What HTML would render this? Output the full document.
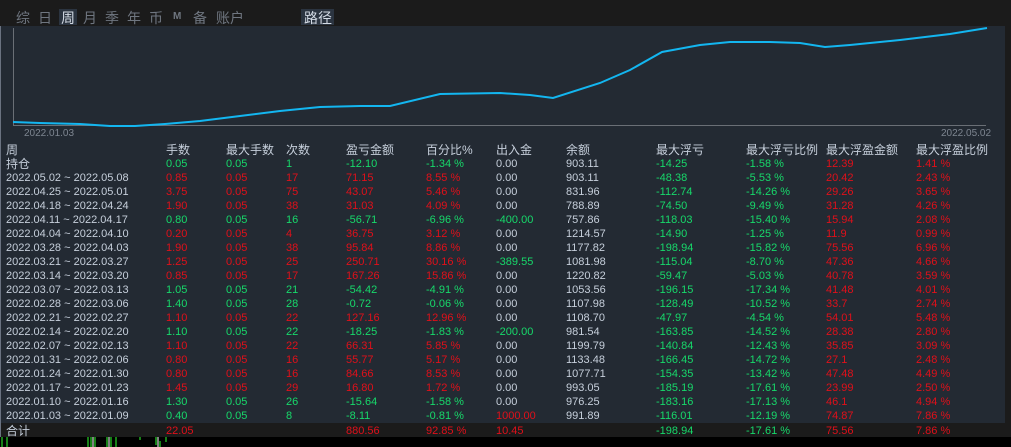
<!DOCTYPE html><html><head><meta charset="utf-8"><style>
body{margin:0;width:1011px;height:447px;background:#232a33;overflow:hidden;position:relative;font-family:"Liberation Sans","Noto Sans CJK SC",sans-serif;font-size:11px;color:#c6cfdb}
.top{position:absolute;left:0;top:0;width:1011px;height:26px;background:#1b1b1b}
.tab{position:absolute;top:8px;font-size:14px;color:#6f7680}
.row{position:absolute;left:0;width:1005px;height:14px;line-height:14px}
.row span{position:absolute;white-space:nowrap}
.a{left:6px}.b{left:166px}.c{left:226px}.d{left:286px}.e{left:346px}.f{left:426px}.g{left:496px}.h{left:566px}.i{left:656px}.j{left:746px}.k{left:826px}.l{left:916px}
.G{color:#17d86a}.R{color:#e0101a}
.hd{font-size:12px}
.cn{font-size:12px}
</style></head><body>
<div class="top">
<span class="tab" style="left:16px">综</span><span class="tab" style="left:38px">日</span>
<span style="position:absolute;left:59px;top:9px;width:18px;height:16px;background:#2b3440"></span>
<span class="tab" style="left:61px;color:#d4dbe5">周</span><span class="tab" style="left:83px">月</span><span class="tab" style="left:105px">季</span><span class="tab" style="left:127px">年</span><span class="tab" style="left:149px">币</span><span class="tab" style="left:173px;font-size:10px;top:11px;font-weight:bold">M</span><span class="tab" style="left:193px">备</span><span class="tab" style="left:216px">账户</span>
<span style="position:absolute;left:301px;top:9px;width:33px;height:16px;background:#2b3440"></span>
<span class="tab" style="left:304px;color:#d4dbe5">路径</span>
</div>
<div style="position:absolute;left:0;top:26px;width:1px;height:411px;background:#6a7280"></div>
<div style="position:absolute;left:1005px;top:26px;width:6px;height:411px;background:#1b1b1b"></div>
<svg style="position:absolute;left:0;top:0" width="1011" height="140">
<line x1="13.5" y1="28" x2="13.5" y2="125" stroke="#6a6f76"/>
<line x1="13" y1="125.5" x2="986" y2="125.5" stroke="#6a6f76"/>
<polyline fill="none" stroke="#13b6f0" stroke-width="2" points="13,122 40,123 80,124 110,126 135,126 165,124 200,121 240,116 280,111 320,107 360,106 390,106 440,94 500,93 530,95 553,98 600,83 630,70 662,52 700,45 730,42 770,42 800,43 825,47 850,45 900,40 950,34 987,28"/>
<text x="24" y="136" fill="#7d8590" font-size="10" font-family="Liberation Sans">2022.01.03</text>
<text x="941" y="136" fill="#7d8590" font-size="10" font-family="Liberation Sans">2022.05.02</text>
</svg>
<div class="row hd" style="top:143px"><span class="a">周</span><span class="b">手数</span><span class="c">最大手数</span><span class="d">次数</span><span class="e">盈亏金额</span><span class="f">百分比%</span><span class="g">出入金</span><span class="h">余额</span><span class="i">最大浮亏</span><span class="j">最大浮亏比例</span><span class="k">最大浮盈金额</span><span class="l">最大浮盈比例</span></div>
<div class="row" style="top:157px"><span class="a cn">持仓</span><span class="b G">0.05</span><span class="c G">0.05</span><span class="d G">1</span><span class="e G">-12.10</span><span class="f G">-1.34 %</span><span class="g">0.00</span><span class="h">903.11</span><span class="i G">-14.25</span><span class="j G">-1.58 %</span><span class="k R">12.39</span><span class="l R">1.41 %</span></div>
<div class="row" style="top:171px"><span class="a">2022.05.02 ~ 2022.05.08</span><span class="b R">0.85</span><span class="c R">0.05</span><span class="d R">17</span><span class="e R">71.15</span><span class="f R">8.55 %</span><span class="g">0.00</span><span class="h">903.11</span><span class="i G">-48.38</span><span class="j G">-5.53 %</span><span class="k R">20.42</span><span class="l R">2.43 %</span></div>
<div class="row" style="top:185px"><span class="a">2022.04.25 ~ 2022.05.01</span><span class="b R">3.75</span><span class="c R">0.05</span><span class="d R">75</span><span class="e R">43.07</span><span class="f R">5.46 %</span><span class="g">0.00</span><span class="h">831.96</span><span class="i G">-112.74</span><span class="j G">-14.26 %</span><span class="k R">29.26</span><span class="l R">3.65 %</span></div>
<div class="row" style="top:199px"><span class="a">2022.04.18 ~ 2022.04.24</span><span class="b R">1.90</span><span class="c R">0.05</span><span class="d R">38</span><span class="e R">31.03</span><span class="f R">4.09 %</span><span class="g">0.00</span><span class="h">788.89</span><span class="i G">-74.50</span><span class="j G">-9.49 %</span><span class="k R">31.28</span><span class="l R">4.26 %</span></div>
<div class="row" style="top:213px"><span class="a">2022.04.11 ~ 2022.04.17</span><span class="b G">0.80</span><span class="c G">0.05</span><span class="d G">16</span><span class="e G">-56.71</span><span class="f G">-6.96 %</span><span class="g G">-400.00</span><span class="h">757.86</span><span class="i G">-118.03</span><span class="j G">-15.40 %</span><span class="k R">15.94</span><span class="l R">2.08 %</span></div>
<div class="row" style="top:227px"><span class="a">2022.04.04 ~ 2022.04.10</span><span class="b R">0.20</span><span class="c R">0.05</span><span class="d R">4</span><span class="e R">36.75</span><span class="f R">3.12 %</span><span class="g">0.00</span><span class="h">1214.57</span><span class="i G">-14.90</span><span class="j G">-1.25 %</span><span class="k R">11.9</span><span class="l R">0.99 %</span></div>
<div class="row" style="top:241px"><span class="a">2022.03.28 ~ 2022.04.03</span><span class="b R">1.90</span><span class="c R">0.05</span><span class="d R">38</span><span class="e R">95.84</span><span class="f R">8.86 %</span><span class="g">0.00</span><span class="h">1177.82</span><span class="i G">-198.94</span><span class="j G">-15.82 %</span><span class="k R">75.56</span><span class="l R">6.96 %</span></div>
<div class="row" style="top:255px"><span class="a">2022.03.21 ~ 2022.03.27</span><span class="b R">1.25</span><span class="c R">0.05</span><span class="d R">25</span><span class="e R">250.71</span><span class="f R">30.16 %</span><span class="g G">-389.55</span><span class="h">1081.98</span><span class="i G">-115.04</span><span class="j G">-8.70 %</span><span class="k R">47.36</span><span class="l R">4.66 %</span></div>
<div class="row" style="top:269px"><span class="a">2022.03.14 ~ 2022.03.20</span><span class="b R">0.85</span><span class="c R">0.05</span><span class="d R">17</span><span class="e R">167.26</span><span class="f R">15.86 %</span><span class="g">0.00</span><span class="h">1220.82</span><span class="i G">-59.47</span><span class="j G">-5.03 %</span><span class="k R">40.78</span><span class="l R">3.59 %</span></div>
<div class="row" style="top:283px"><span class="a">2022.03.07 ~ 2022.03.13</span><span class="b G">1.05</span><span class="c G">0.05</span><span class="d G">21</span><span class="e G">-54.42</span><span class="f G">-4.91 %</span><span class="g">0.00</span><span class="h">1053.56</span><span class="i G">-196.15</span><span class="j G">-17.34 %</span><span class="k R">41.48</span><span class="l R">4.01 %</span></div>
<div class="row" style="top:297px"><span class="a">2022.02.28 ~ 2022.03.06</span><span class="b G">1.40</span><span class="c G">0.05</span><span class="d G">28</span><span class="e G">-0.72</span><span class="f G">-0.06 %</span><span class="g">0.00</span><span class="h">1107.98</span><span class="i G">-128.49</span><span class="j G">-10.52 %</span><span class="k R">33.7</span><span class="l R">2.74 %</span></div>
<div class="row" style="top:311px"><span class="a">2022.02.21 ~ 2022.02.27</span><span class="b R">1.10</span><span class="c R">0.05</span><span class="d R">22</span><span class="e R">127.16</span><span class="f R">12.96 %</span><span class="g">0.00</span><span class="h">1108.70</span><span class="i G">-47.97</span><span class="j G">-4.54 %</span><span class="k R">54.01</span><span class="l R">5.48 %</span></div>
<div class="row" style="top:325px"><span class="a">2022.02.14 ~ 2022.02.20</span><span class="b G">1.10</span><span class="c G">0.05</span><span class="d G">22</span><span class="e G">-18.25</span><span class="f G">-1.83 %</span><span class="g G">-200.00</span><span class="h">981.54</span><span class="i G">-163.85</span><span class="j G">-14.52 %</span><span class="k R">28.38</span><span class="l R">2.80 %</span></div>
<div class="row" style="top:339px"><span class="a">2022.02.07 ~ 2022.02.13</span><span class="b R">1.10</span><span class="c R">0.05</span><span class="d R">22</span><span class="e R">66.31</span><span class="f R">5.85 %</span><span class="g">0.00</span><span class="h">1199.79</span><span class="i G">-140.84</span><span class="j G">-12.43 %</span><span class="k R">35.85</span><span class="l R">3.09 %</span></div>
<div class="row" style="top:353px"><span class="a">2022.01.31 ~ 2022.02.06</span><span class="b R">0.80</span><span class="c R">0.05</span><span class="d R">16</span><span class="e R">55.77</span><span class="f R">5.17 %</span><span class="g">0.00</span><span class="h">1133.48</span><span class="i G">-166.45</span><span class="j G">-14.72 %</span><span class="k R">27.1</span><span class="l R">2.48 %</span></div>
<div class="row" style="top:367px"><span class="a">2022.01.24 ~ 2022.01.30</span><span class="b R">0.80</span><span class="c R">0.05</span><span class="d R">16</span><span class="e R">84.66</span><span class="f R">8.53 %</span><span class="g">0.00</span><span class="h">1077.71</span><span class="i G">-154.35</span><span class="j G">-13.42 %</span><span class="k R">47.48</span><span class="l R">4.49 %</span></div>
<div class="row" style="top:381px"><span class="a">2022.01.17 ~ 2022.01.23</span><span class="b R">1.45</span><span class="c R">0.05</span><span class="d R">29</span><span class="e R">16.80</span><span class="f R">1.72 %</span><span class="g">0.00</span><span class="h">993.05</span><span class="i G">-185.19</span><span class="j G">-17.61 %</span><span class="k R">23.99</span><span class="l R">2.50 %</span></div>
<div class="row" style="top:395px"><span class="a">2022.01.10 ~ 2022.01.16</span><span class="b G">1.30</span><span class="c G">0.05</span><span class="d G">26</span><span class="e G">-15.64</span><span class="f G">-1.58 %</span><span class="g">0.00</span><span class="h">976.25</span><span class="i G">-183.16</span><span class="j G">-17.13 %</span><span class="k R">46.1</span><span class="l R">4.94 %</span></div>
<div class="row" style="top:409px"><span class="a">2022.01.03 ~ 2022.01.09</span><span class="b G">0.40</span><span class="c G">0.05</span><span class="d G">8</span><span class="e G">-8.11</span><span class="f G">-0.81 %</span><span class="g R">1000.00</span><span class="h">991.89</span><span class="i G">-116.01</span><span class="j G">-12.19 %</span><span class="k R">74.87</span><span class="l R">7.86 %</span></div>
<div style="position:absolute;left:1px;top:423px;width:1004px;height:14px;background:#1b1b1b"></div>
<div class="row" style="top:424px"><span class="a cn">合计</span><span class="b R">22.05</span><span class="e R">880.56</span><span class="f R">92.85 %</span><span class="g R">10.45</span><span class="i G">-198.94</span><span class="j G">-17.61 %</span><span class="k R">75.56</span><span class="l R">7.86 %</span></div>
<div style="position:absolute;left:0;top:437px;width:1011px;height:10px;background:#000"></div>
<svg style="position:absolute;left:0;top:437px" width="200" height="10"><g stroke="#2eff2e" stroke-width="1">
<line x1="2" y1="0" x2="2" y2="10"/><line x1="7" y1="0" x2="7" y2="10"/><line x1="88" y1="0" x2="88" y2="10"/><line x1="91" y1="0" x2="91" y2="10"/><line x1="95" y1="0" x2="95" y2="10"/><line x1="107" y1="0" x2="107" y2="10"/><line x1="111" y1="0" x2="111" y2="10"/><line x1="116" y1="0" x2="116" y2="10"/><line x1="140" y1="0" x2="140" y2="3"/><line x1="156" y1="0" x2="156" y2="8"/><line x1="160" y1="4" x2="160" y2="10"/><line x1="166" y1="0" x2="166" y2="5"/></g><g stroke="#fff"><line x1="93" y1="0" x2="93" y2="10"/><line x1="109" y1="0" x2="109" y2="10"/><line x1="158" y1="0" x2="158" y2="10"/></g></svg>
</body></html>
